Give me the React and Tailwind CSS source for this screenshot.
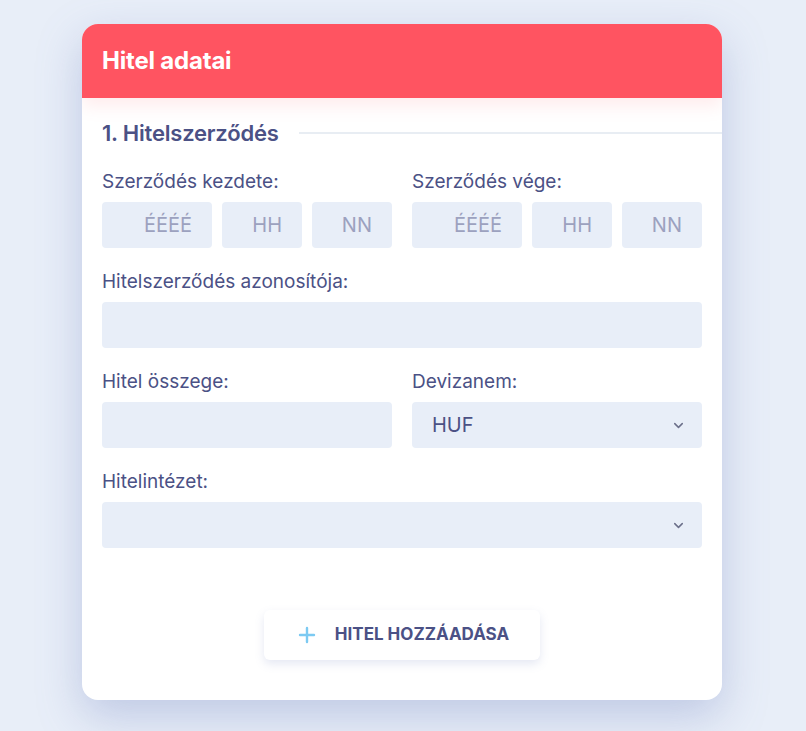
import { ChevronDown, Plus } from 'lucide-react';

function Label({ children }) {
  return <div className="text-[19px] leading-6 text-[#4b5185] mb-2">{children}</div>;
}

function DateInputs() {
  return (
    <div className="flex gap-[10px]">
      <div className="w-[110px] h-[46px] rounded bg-[#e8eef8] flex items-center justify-end pr-5 text-[20px] text-[#9ca1bf]">ÉÉÉÉ</div>
      <div className="w-[80px] h-[46px] rounded bg-[#e8eef8] flex items-center justify-end pr-5 text-[20px] text-[#9ca1bf]">HH</div>
      <div className="w-[80px] h-[46px] rounded bg-[#e8eef8] flex items-center justify-end pr-5 text-[20px] text-[#9ca1bf]">NN</div>
    </div>
  );
}

function Select({ value }) {
  return (
    <div className="h-[46px] rounded bg-[#e8eef8] flex items-center justify-between pl-5 pr-4 text-[20px] text-[#4b5185]">
      <span>{value}</span>
      <ChevronDown size={15} strokeWidth={2.4} className="text-[#6b6f8a]" />
    </div>
  );
}

export default function App() {
  return (
    <div className="min-h-[731px] bg-[#e8eef8] flex justify-center pt-6 pb-[31px] pr-[2px]" style={{ fontFamily: 'Inter, "Noto Sans", sans-serif' }}>
      <div className="w-[640px] bg-white rounded-2xl shadow-[0_16px_44px_rgba(110,130,190,0.34)] overflow-hidden">
        {/* Header */}
        <div className="relative z-10 h-[74px] bg-[#ff5461] flex items-center px-5 shadow-[0_8px_16px_rgba(255,120,130,0.14)]">
          <h1 className="text-[24px] font-bold text-white tracking-[-0.2px]">Hitel adatai</h1>
        </div>

        <div className="pl-5 pt-[21px] pb-10">
          {/* Section title */}
          <div className="flex items-center gap-5 h-7">
            <h2 className="text-[22px] font-semibold text-[#4b5185] tracking-[-0.2px]">1. Hitelszerződés</h2>
            <div className="flex-1 h-[2px] bg-[#e8edf3]" />
          </div>

          <div className="pr-5 mt-[23px] flex flex-col gap-[22px]">
            <div className="grid grid-cols-2 gap-5">
              <div>
                <Label>Szerződés kezdete:</Label>
                <DateInputs />
              </div>
              <div>
                <Label>Szerződés vége:</Label>
                <DateInputs />
              </div>
            </div>

            <div>
              <Label>Hitelszerződés azonosítója:</Label>
              <div className="h-[46px] rounded bg-[#e8eef8]" />
            </div>

            <div className="grid grid-cols-2 gap-5">
              <div>
                <Label>Hitel összege:</Label>
                <div className="h-[46px] rounded bg-[#e8eef8]" />
              </div>
              <div>
                <Label>Devizanem:</Label>
                <Select value="HUF" />
              </div>
            </div>

            <div>
              <Label>Hitelintézet:</Label>
              <Select value="" />
            </div>
          </div>

          <div className="pr-5 mt-[62px] flex justify-center">
            <button className="w-[276px] h-[50px] rounded-md bg-white shadow-[0_4px_10px_rgba(110,130,190,0.18)] flex items-center justify-center gap-4 text-[17px] font-bold text-[#4b5185]">
              <Plus size={24} strokeWidth={2.4} className="text-[#7ccaf2]" />
              <span>HITEL HOZZÁADÁSA</span>
            </button>
          </div>
        </div>
      </div>
    </div>
  );
}
